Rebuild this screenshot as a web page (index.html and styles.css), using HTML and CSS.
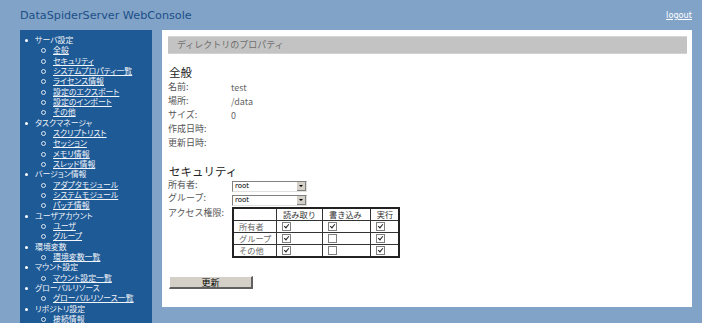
FILE: index.html
```html
<!DOCTYPE html>
<html lang="ja">
<head>
<meta charset="utf-8">
<title>DataSpiderServer WebConsole</title>
<link rel="stylesheet" href="styles.css">
</head>
<body>
<header class="top">
  <div class="brand">DataSpiderServer WebConsole</div>
  <a class="logout" href="#">logout</a>
</header>
<div class="layout">
  <nav class="nav">
    <ul class="lv1">
      <li>サーバ設定
        <ul class="lv2">
          <li><a href="#">全般</a></li>
          <li><a href="#">セキュリティ</a></li>
          <li><a href="#">システムプロパティ一覧</a></li>
          <li><a href="#">ライセンス情報</a></li>
          <li><a href="#">設定のエクスポート</a></li>
          <li><a href="#">設定のインポート</a></li>
          <li><a href="#">その他</a></li>
        </ul>
      </li>
      <li>タスクマネージャ
        <ul class="lv2">
          <li><a href="#">スクリプトリスト</a></li>
          <li><a href="#">セッション</a></li>
          <li><a href="#">メモリ情報</a></li>
          <li><a href="#">スレッド情報</a></li>
        </ul>
      </li>
      <li>バージョン情報
        <ul class="lv2">
          <li><a href="#">アダプタモジュール</a></li>
          <li><a href="#">システムモジュール</a></li>
          <li><a href="#">パッチ情報</a></li>
        </ul>
      </li>
      <li>ユーザアカウント
        <ul class="lv2">
          <li><a href="#">ユーザ</a></li>
          <li><a href="#">グループ</a></li>
        </ul>
      </li>
      <li>環境変数
        <ul class="lv2">
          <li><a href="#">環境変数一覧</a></li>
        </ul>
      </li>
      <li>マウント設定
        <ul class="lv2">
          <li><a href="#">マウント設定一覧</a></li>
        </ul>
      </li>
      <li>グローバルリソース
        <ul class="lv2">
          <li><a href="#">グローバルリソース一覧</a></li>
        </ul>
      </li>
      <li>リポジトリ設定
        <ul class="lv2">
          <li><a href="#">接続情報</a></li>
        </ul>
      </li>
    </ul>
  </nav>
  <main class="panel">
    <div class="panel-title">ディレクトリのプロパティ</div>
    <section class="sec">
      <h2 class="sec-head">全般</h2>
      <div class="props">
        <div class="lbl">名前:</div><div class="val">test</div>
        <div class="lbl">場所:</div><div class="val">/data</div>
        <div class="lbl">サイズ:</div><div class="val">0</div>
        <div class="lbl">作成日時:</div><div class="val"></div>
        <div class="lbl">更新日時:</div><div class="val"></div>
      </div>
    </section>
    <section class="sec sec-security">
      <h2 class="sec-head">セキュリティ</h2>
      <div class="srow srow-owner">
        <div class="slbl">所有者:</div>
        <span class="select"><span class="select-text">root</span><span class="select-btn"></span></span>
      </div>
      <div class="srow srow-group">
        <div class="slbl">グループ:</div>
        <span class="select"><span class="select-text">root</span><span class="select-btn"></span></span>
      </div>
      <div class="srow srow-perm">
        <div class="slbl">アクセス権限:</div>
        <table class="perm">
          <tr><th class="c1"></th><th class="c2">読み取り</th><th class="c3">書き込み</th><th class="c4">実行</th></tr>
          <tr><td>所有者</td><td><span class="cb on"></span></td><td><span class="cb on"></span></td><td><span class="cb on"></span></td></tr>
          <tr><td>グループ</td><td><span class="cb on"></span></td><td><span class="cb"></span></td><td><span class="cb on"></span></td></tr>
          <tr><td>その他</td><td><span class="cb on"></span></td><td><span class="cb"></span></td><td><span class="cb on"></span></td></tr>
        </table>
      </div>
    </section>
    <div class="actions"><button class="btn" type="button">更新</button></div>
  </main>
</div>
</body>
</html>
```

FILE: styles.css
```css
html, body {
  margin: 0;
  padding: 0;
}
body {
  background: #81a3c7;
  font-family: "Noto Sans CJK JP", "DejaVu Sans", sans-serif;
  height: 323px;
  overflow: hidden;
}
.top {
  height: 30px;
  display: flex;
  align-items: center;
  justify-content: space-between;
  padding: 0 10px 0 20px;
}
.brand {
  font-family: "DejaVu Sans", sans-serif;
  font-size: 11.2px;
  color: #1c4f88;
  margin-top: 1px;
}
.logout {
  font-family: "DejaVu Sans", sans-serif;
  font-size: 8.2px;
  color: #ffffff;
  text-decoration: underline;
}
.layout {
  display: flex;
  align-items: flex-start;
  padding-left: 20px;
  gap: 10px;
}
.nav {
  width: 132px;
  height: 293px;
  background: #1e5a96;
  color: #f2f5f9;
  font-size: 7.9px;
  line-height: 10.33px;
  font-feature-settings: "palt";
  overflow: hidden;
  padding-top: 5px;
  box-sizing: border-box;
}
.nav ul {
  margin: 0;
  padding: 0;
  list-style: none;
}
.lv1 > li {
  position: relative;
  padding-left: 15px;
}
.lv1 > li::before {
  content: "";
  position: absolute;
  left: 5px;
  top: 4px;
  width: 3px;
  height: 3px;
  border-radius: 50%;
  background: #ffffff;
}
.lv2 > li {
  position: relative;
  padding-left: 18px;
}
.lv2 > li::before {
  content: "";
  position: absolute;
  left: 6px;
  top: 3px;
  width: 3px;
  height: 3px;
  border-radius: 50%;
  border: 1px solid #dfe6ee;
}
.nav a {
  color: #f2f5f9;
  text-decoration: underline;
}
.panel {
  width: 530px;
  height: 277px;
  background: #ffffff;
  padding: 6px 5px 0 6px;
  box-sizing: border-box;
}
.panel-title {
  height: 18px;
  background: #c3c3c3;
  border-top: 1px solid #d6d6d6;
  border-bottom: 1px solid #d2d2d2;
  box-sizing: border-box;
  color: #6e6e6e;
  font-size: 9px;
  line-height: 16px;
  padding-left: 9px;
}
.sec-head {
  margin: 11px 0 0 1px;
  font-size: 11.5px;
  font-weight: normal;
  color: #222222;
  line-height: 15px;
}
.props {
  display: grid;
  grid-template-columns: 63px 1fr;
  grid-auto-rows: 14px;
  font-size: 9px;
  line-height: 14px;
  color: #555555;
}
.val {
  color: #666666;
  padding-top: 1px;
}
.sec-security .sec-head {
  margin-top: 14px;
}
.srow {
  display: flex;
  align-items: flex-start;
  font-size: 9px;
  line-height: 12px;
  color: #555555;
}
.slbl {
  width: 64px;
  flex: none;
}
.srow-owner .select {
  margin-top: 2px;
}
.srow-group .select {
  margin-top: 3px;
}
.srow-perm {
  margin-top: 1px;
}
.select {
  display: flex;
  width: 75px;
  height: 11px;
  border-top: 1px solid #808080;
  border-left: 1px solid #808080;
  border-bottom: 1px solid #e0e0e0;
  border-right: 1px solid #e0e0e0;
  box-sizing: border-box;
  background: #ffffff;
}
.select-text {
  flex: 1;
  font-family: "DejaVu Sans", sans-serif;
  font-size: 7px;
  line-height: 9px;
  color: #000000;
  padding-left: 2px;
}
.select-btn {
  position: relative;
  width: 9px;
  background: #d4d0c8;
  border-left: 1px solid #ffffff;
  box-shadow: inset -1px -1px 0 #808080;
}
.select-btn::after {
  content: "";
  position: absolute;
  left: 2px;
  top: 3px;
  border-left: 2px solid transparent;
  border-right: 2px solid transparent;
  border-top: 2px solid #000000;
}
.perm {
  border-collapse: collapse;
  border: 2px solid #222222;
  width: 168px;
  font-size: 8.2px;
  color: #666666;
}
.perm th, .perm td {
  border: 1px solid #333333;
  height: 11px;
  padding: 0 0 0 5px;
  line-height: 11px;
  font-weight: normal;
  text-align: left;
  color: #666666;
}
.perm th {
  color: #333333;
  padding-left: 6px;
}
.perm .c1 { width: 38px; }
.perm .c2 { width: 41px; }
.perm .c3 { width: 43px; }
.perm .c4 { width: 22px; }
.cb {
  display: inline-block;
  width: 7px;
  height: 7px;
  border: 1px solid #808080;
  background: #ffffff;
  position: relative;
  vertical-align: -1px;
}
.cb.on::after {
  content: "";
  position: absolute;
  left: 2px;
  top: 0px;
  width: 2px;
  height: 4px;
  border-right: 1.5px solid #222222;
  border-bottom: 1.5px solid #222222;
  transform: rotate(40deg);
}
.actions {
  margin-top: 18px;
  padding-left: 1px;
}
.btn {
  display: block;
  width: 84px;
  height: 13px;
  padding: 0;
  background: #d4d0c8;
  border-top: 1px solid #ffffff;
  border-left: 1px solid #ffffff;
  border-right: 2px solid #606060;
  border-bottom: 2px solid #606060;
  font-family: "Noto Sans CJK JP", sans-serif;
  font-size: 9px;
  line-height: 9px;
  color: #000000;
}
```
